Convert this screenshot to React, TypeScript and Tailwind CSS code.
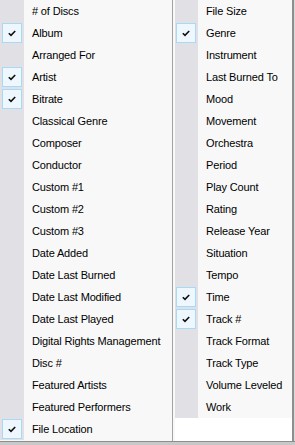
import React from 'react';

const leftItems: [string, boolean][] = [
  ['# of Discs', false],
  ['Album', true],
  ['Arranged For', false],
  ['Artist', true],
  ['Bitrate', true],
  ['Classical Genre', false],
  ['Composer', false],
  ['Conductor', false],
  ['Custom #1', false],
  ['Custom #2', false],
  ['Custom #3', false],
  ['Date Added', false],
  ['Date Last Burned', false],
  ['Date Last Modified', false],
  ['Date Last Played', false],
  ['Digital Rights Management', false],
  ['Disc #', false],
  ['Featured Artists', false],
  ['Featured Performers', false],
  ['File Location', true],
];

const rightItems: [string, boolean][] = [
  ['File Size', false],
  ['Genre', true],
  ['Instrument', false],
  ['Last Burned To', false],
  ['Mood', false],
  ['Movement', false],
  ['Orchestra', false],
  ['Period', false],
  ['Play Count', false],
  ['Rating', false],
  ['Release Year', false],
  ['Situation', false],
  ['Tempo', false],
  ['Time', true],
  ['Track #', true],
  ['Track Format', false],
  ['Track Type', false],
  ['Volume Leveled', false],
  ['Work', false],
];

function Check() {
  return <svg width="8" height="7" viewBox="0 0 8 7" fill="none">
      <path d="M0.8 3.2 L3 5.4 L7.2 1" stroke="#111" strokeWidth="1.6" />
    </svg>;
}

function MenuItem({ label, checked, right }: { label: string; checked: boolean; right?: boolean }) {
  return <div className="flex h-[22px] items-center">
      <div className={right ? 'flex h-full w-[23px] shrink-0 items-center bg-[#e1e1e5] pl-px' : 'flex h-full w-[24px] shrink-0 items-center bg-[#e1e1e5] pl-[2px]'}>
        {checked && <div className="flex h-[20px] w-[20px] items-center justify-center border border-[#a9d9f5] bg-[#eef7fd]">
            <Check />
          </div>}
      </div>
      <span className="pl-[8px] whitespace-nowrap text-black">{label}</span>
    </div>;
}

export default function App() {
  return <div className="flex h-[445px] w-[295px] flex-col bg-white text-[11px] tracking-[-0.15px] font-['Liberation_Sans',Arial,sans-serif]">
      <div className="flex h-[441px]">
        <div className="w-[172px] bg-[#f8f8f8]">
          {leftItems.map(([l, c]) => <MenuItem key={l} label={l} checked={c} />)}
        </div>
        <div className="w-px bg-[#a3a3a3]" />
        <div className="w-[2px] bg-[#f8f8f8]" />
        <div className="w-[117px] bg-white">
          <div className="bg-[#f8f8f8]">
            {rightItems.map(([l, c]) => <MenuItem key={l} label={l} checked={c} right />)}
          </div>
        </div>
        <div className="w-[2px] bg-[#8e8e8e]" />
        <div className="w-px bg-[#d8d8d8]" />
      </div>
      <div className="h-px bg-[#8e8e8e]" />
      <div className="flex-1 bg-[#c8c8c8]" />
    </div>;
}
